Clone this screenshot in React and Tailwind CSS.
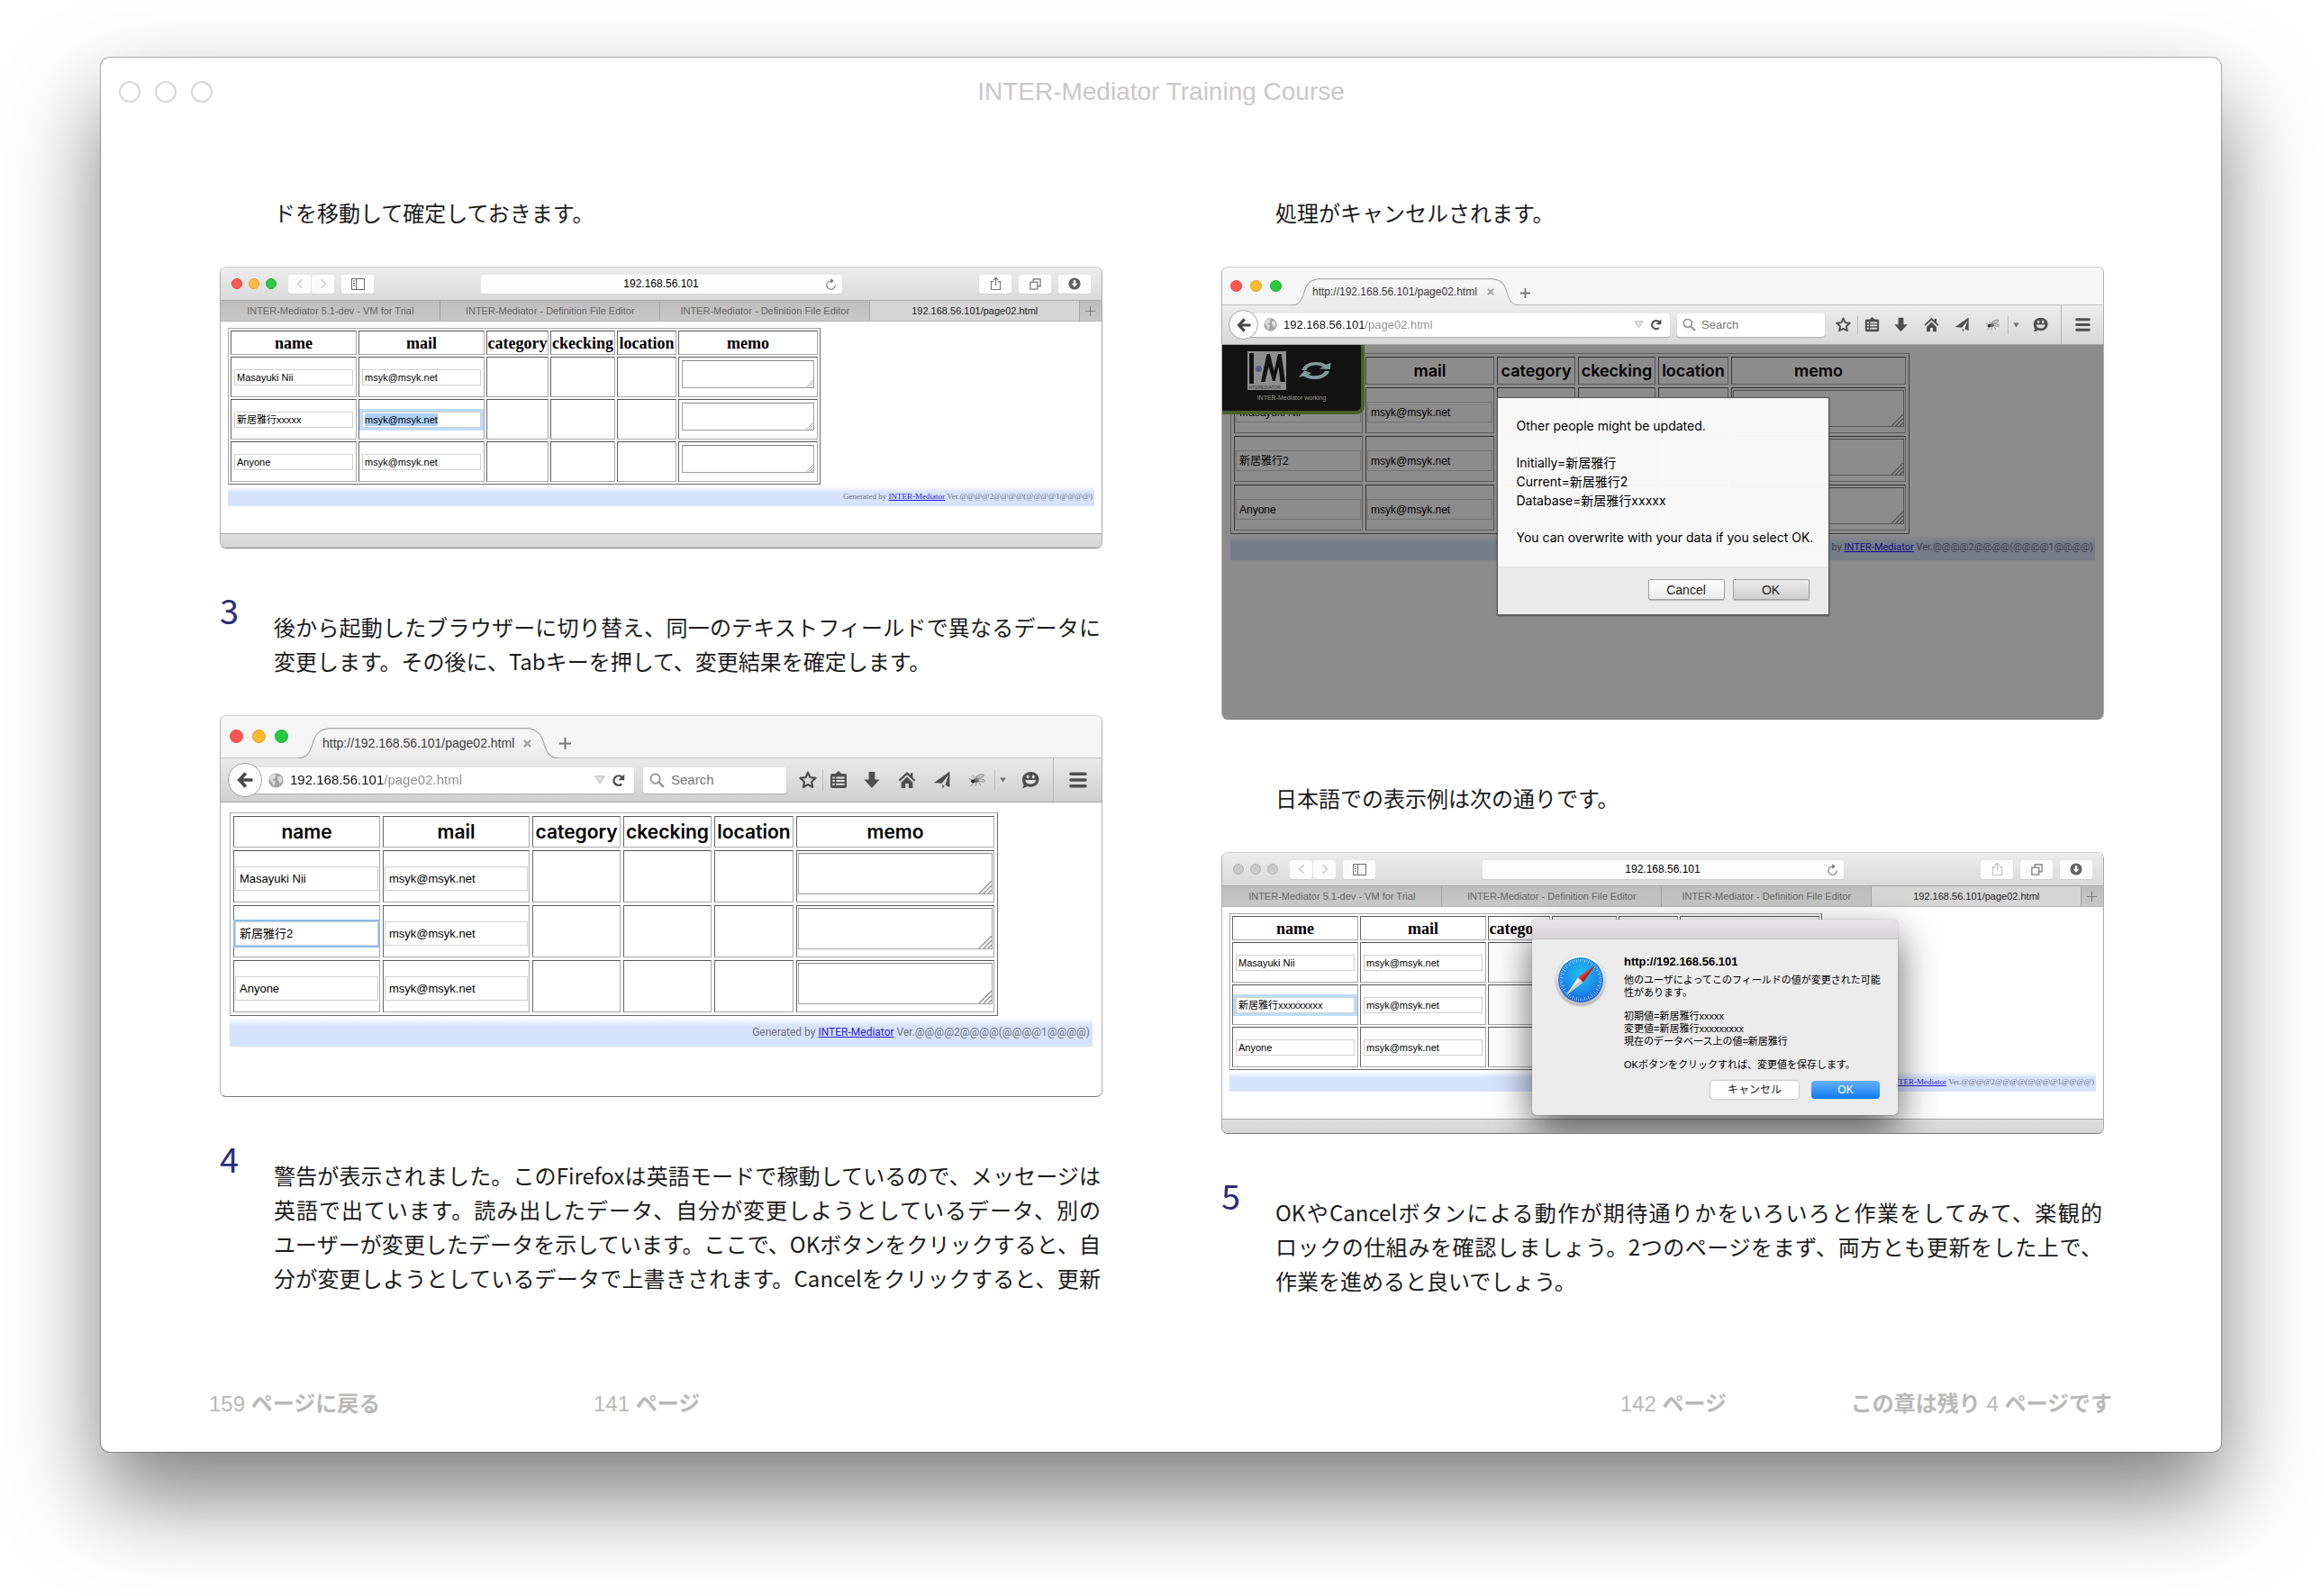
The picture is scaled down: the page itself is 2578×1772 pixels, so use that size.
import React from "react";

const SANS = "font-['Liberation_Sans','Noto_Sans_CJK_JP',sans-serif]";
const SERIF = "font-['Liberation_Serif',serif]";
const JP = "font-['Noto_Sans_CJK_JP',sans-serif]";

/* ---------- icons ---------- */

function ChevronIcon({ flip }) {
  return (
    <svg viewBox="0 0 10 14" className="h-[12px] w-[8px]" fill="none" stroke="#c4c4c4" strokeWidth="1.6">
      <path d={flip ? "M2 1l6 6-6 6" : "M8 1L2 7l6 6"} />
    </svg>
  );
}

function SidebarIcon() {
  return (
    <svg viewBox="0 0 15 13" className="h-[13px] w-[15px]" fill="none" stroke="#6b6b6b" strokeWidth="1">
      <rect x="0.5" y="0.5" width="14" height="12" />
      <path d="M5.5 0.5v12M2 3h2M2 5.500h2M2 8h2" />
    </svg>
  );
}

function SafariReloadIcon() {
  return (
    <svg viewBox="0 0 14 14" className="h-[13px] w-[13px]" fill="none" stroke="#7b7b7b" strokeWidth="1.2">
      <path d="M7 3.200A5 5 0 1 0 12 8" />
      <path d="M6.500 0.300L10.800 3.200 6.500 6z" fill="#7b7b7b" stroke="none" />
    </svg>
  );
}

function ShareIcon({ dim }) {
  return (
    <svg viewBox="0 0 14 17" className="h-[16px] w-[13px]" fill="none" stroke={dim ? "#c0c0c0" : "#757575"} strokeWidth="1.200">
      <path d="M4.500 6H1.600v9.500h10.800V6H9.500M7 11V1.500M4.200 4.200L7 1.400l2.800 2.800" />
    </svg>
  );
}

function TabsIcon() {
  return (
    <svg viewBox="0 0 14 14" className="h-[13px] w-[13px]" fill="none" stroke="#6b6b6b" strokeWidth="1.200">
      <rect x="1" y="4.500" width="8.500" height="8.500" />
      <path d="M4.500 4.500V1H13v8.500H9.500" />
    </svg>
  );
}

function DownloadsIcon() {
  return (
    <svg viewBox="0 0 14 14" className="h-[14px] w-[14px]">
      <circle cx="7" cy="7" r="6.600" fill="#636363" />
      <path d="M5.800 3h2.400v3.800h2.300L7 10.800 3.500 6.800h2.300z" fill="#fff" />
    </svg>
  );
}

function PlusIcon({ className, stroke = "#7d7d7d", width = 1.2 }) {
  return (
    <svg viewBox="0 0 12 12" className={className} stroke={stroke} strokeWidth={width}>
      <path d="M6 0v12M0 6h12" />
    </svg>
  );
}

function CloseIcon({ className }) {
  return (
    <svg viewBox="0 0 10 10" className={className} stroke="#a6a6a6" strokeWidth="2.600">
      <path d="M1 1l8 8M9 1l-8 8" />
    </svg>
  );
}

function BackIcon({ className }) {
  return (
    <svg viewBox="0 0 18 18" className={className} fill="none" stroke="#4a4a4a" strokeWidth="3.600">
      <path d="M9.800 1.500L2.800 9l7 7.500M3.200 9H17.500" />
    </svg>
  );
}

function GlobeIcon({ className }) {
  return (
    <svg viewBox="0 0 18 18" className={className}>
      <circle cx="9" cy="9" r="8.600" fill="#a3a3a3" />
      <path
        d="M1.500 6C3 3 5.500 1.500 8.500 1.600c1 .6.600 1.800-.6 2.600l1 1.200-1.800 1.800-2.400.4c.4 1.400 2.400 1 3.400 2.400.6 1.600-.6 2.400-1 3.800-.2 1.400-1.400 2-2 .8-.4-1.600 0-2.600-1.200-3.800C2.400 9.600 1.200 8 1.500 6z"
        fill="#dcdcdc"
      />
      <path d="M11 5.600c.6-1.600 1.800-2.200 3-1.800 1.400 1.200 2.200 2.800 2.200 4.600-.4 1.600-1.200 3.200-2.400 4.400-1.200.2-.8-1.400-1.200-2.800-1.800-.2-2.400-2.600-1.600-4.400z" fill="#dcdcdc" />
    </svg>
  );
}

function TriangleIcon({ className, fill }) {
  return (
    <svg viewBox="0 0 12 10" className={className}>
      <path d="M0.800 0.800h10.400L6 9z" fill={fill} stroke="#bdbdbd" strokeWidth={fill === "#e2e2e2" ? 1 : 0} />
    </svg>
  );
}

function FirefoxReloadIcon({ className }) {
  return (
    <svg viewBox="0 0 16 16" className={className} fill="none" stroke="#4d4d4d" strokeWidth="2.600">
      <path d="M12 12.300A5.600 5.600 0 1 1 12.300 4.200" />
      <path d="M15.200 0.500v7.300H8z" fill="#4d4d4d" stroke="none" />
    </svg>
  );
}

function SearchIcon({ className }) {
  return (
    <svg viewBox="0 0 18 18" className={className} fill="none" stroke="#9a9a9a">
      <circle cx="7" cy="7" r="5.400" strokeWidth="2.200" />
      <path d="M11 11l5.800 5.800" strokeWidth="2.800" />
    </svg>
  );
}

function StarIcon({ className }) {
  return (
    <svg viewBox="0 0 20 20" className={className} fill="none" stroke="#4f4f4f" strokeWidth="2.200" strokeLinejoin="round">
      <path d="M10 1.600l2.500 5.600 6 .7-4.500 4.100 1.200 6L10 15l-5.200 3 1.200-6L1.500 7.900l6-.7z" />
    </svg>
  );
}

function ClipboardIcon({ className }) {
  return (
    <svg viewBox="0 0 20 20" className={className}>
      <path d="M7 3V2.500L10 0l3 2.500V3h4a2 2 0 0 1 2 2v12a2 2 0 0 1-2 2H3a2 2 0 0 1-2-2V5a2 2 0 0 1 2-2z" fill="#4f4f4f" />
      <path d="M3.400 6.400h2.400v2H3.400zM7.400 6.400h9.200v2H7.400zM3.400 10.100h2.400v2H3.400zM7.400 10.100h9.200v2H7.400zM3.400 13.800h2.400v2H3.400zM7.400 13.800h9.200v2H7.400z" fill="#e3e3e3" />
    </svg>
  );
}

function DownIcon({ className }) {
  return (
    <svg viewBox="0 0 20 20" className={className}>
      <path d="M6.600 1h6.800v8.600h5.200L10 19 1.400 9.600h5.200z" fill="#4f4f4f" />
    </svg>
  );
}

function HomeIcon({ className }) {
  return (
    <svg viewBox="0 0 20 20" className={className} fill="#4f4f4f">
      <path d="M10 6.600l6.400 6.200V19h-4.600v-5H8.200v5H3.600v-6.200z" />
      <path d="M10 1l3.800 3.600V2.200h2.600v5l3 2.900-1.500 1.400L10 4.200l-7.900 7.300L.6 10.100z" />
    </svg>
  );
}

function PlaneIcon({ className }) {
  return (
    <svg viewBox="0 0 20 20" className={className} fill="#4f4f4f">
      <path d="M18.400 0.600V18l-5-2.600L17 4.600l-7.400 9.200L1 13z" />
      <path d="M10.200 15.200l2.400 1.300L10.600 19.500z" />
    </svg>
  );
}

function FlyIcon({ className }) {
  return (
    <svg viewBox="0 0 20 16" className={className}>
      <ellipse cx="9" cy="8.500" rx="3.200" ry="2.400" fill="#6a6a6a" />
      <ellipse cx="5.200" cy="9.400" rx="2" ry="2" fill="#1d1d1d" />
      <ellipse cx="13" cy="4" rx="4.600" ry="1.800" transform="rotate(-20 13 4)" fill="#c4c4c4" stroke="#777" strokeWidth="0.700" />
      <ellipse cx="15" cy="8.600" rx="3.800" ry="1.500" transform="rotate(10 15 8.600)" fill="#cecece" stroke="#808080" strokeWidth="0.700" />
      <path d="M4 8L0.500 6M5 12l-2 3M9 11l-1 4M12 11l2 3.500M7 6L5.500 3" stroke="#777" strokeWidth="0.800" />
    </svg>
  );
}

function SmileIcon({ className }) {
  return (
    <svg viewBox="0 0 20 20" className={className}>
      <path d="M10.300 1c5.200 0 9.200 3.500 9.200 8.300s-4 8.500-9.200 8.500c-1.400 0-2.700-.2-3.900-.7C4.800 18.300 2.900 18.900.8 18.900c1-1 1.600-2 1.900-3.200C1.600 14 1 11.800 1 9.500 1 4.600 5.100 1 10.300 1z" fill="#4f4f4f" />
      <ellipse cx="7.200" cy="6.400" rx="1.500" ry="2" fill="#e0e0e0" />
      <ellipse cx="13.200" cy="6.400" rx="1.500" ry="2" fill="#e0e0e0" />
      <path d="M4.200 10h12c-.4 3-2.800 4.600-6 4.600S4.600 13 4.200 10z" fill="#e0e0e0" />
    </svg>
  );
}

function MenuIcon({ className }) {
  return (
    <svg viewBox="0 0 20 18" className={className} stroke="#4f4f4f" strokeWidth="3.600" strokeLinecap="round">
      <path d="M2 2.200h16M2 9h16M2 15.800h16" />
    </svg>
  );
}

function CompassIcon() {
  const ticks = Array.from({ length: 60 }, (_, i) => i * 6);
  return (
    <svg viewBox="0 0 56 56" className="h-[56px] w-[56px] drop-shadow-[0_1px_1px_rgba(0,0,0,0.35)]">
      <defs>
        <radialGradient id="dial" cx="50%" cy="38%" r="62%">
          <stop offset="0" stopColor="#1fc3f5" />
          <stop offset="0.550" stopColor="#1c93ea" />
          <stop offset="1" stopColor="#1b5fd6" />
        </radialGradient>
        <linearGradient id="bezel" x1="0" y1="0" x2="0" y2="1">
          <stop offset="0" stopColor="#fafafa" />
          <stop offset="1" stopColor="#c2c2c2" />
        </linearGradient>
      </defs>
      <circle cx="28" cy="28" r="27.500" fill="url(#bezel)" />
      <circle cx="28" cy="28" r="25" fill="url(#dial)" />
      {ticks.map((a) => (
        <path key={a} d={a % 12 ? "M28 4.500v2" : "M28 4.500v4"} stroke="#bfe4ff" strokeWidth="0.700" transform={`rotate(${a} 28 28)`} />
      ))}
      <path d="M44 11.500L25 25.200l5.600 5.600z" fill="#e8332c" />
      <path d="M44 11.500L27.800 28l2.800 2.800z" fill="#b81f1c" />
      <path d="M12 44.500L25 25.200l5.600 5.600z" fill="#f5f5f5" />
      <path d="M12 44.500L27.800 28l2.800 2.800z" fill="#c9c9c9" />
    </svg>
  );
}

function MediatorLogo() {
  return (
    <svg viewBox="0 0 43 43" className="h-[43px] w-[43px]">
      <rect width="43" height="43" fill="#8e8e8e" />
      <path d="M2 2h5v34H2z" fill="#111" />
      <circle cx="12.500" cy="19.500" r="3.400" fill="#565790" />
      <path d="M15 34L21.500 3h3.500l4.500 19L34 3h3.500L42 34h-5.500L34.500 17 30.500 33h-2.500L23.500 17 19.500 34z" fill="#111" />
      <text x="1.500" y="41.500" fontSize="5" fontFamily="Liberation Sans" fill="#333">
        NTEREDIATOR
      </text>
    </svg>
  );
}

function WorkingIcon() {
  return (
    <svg viewBox="0 0 38 22" className="h-[21px] w-[38px]" fill="#809a99">
      <path d="M3.500 10.500C6 4 12 1 20 1c5 0 9 1.200 12 3l5.500-2-1 7.500L24 9l4-2.400C25.500 5.200 22.500 4.600 19 4.800 13 5.200 9.800 7.200 9 10.500z" />
      <path d="M36 11.500C33 18 27 21 19 21c-4.500 0-8-.8-11-2.400l-2.500-1.100L0 18.500 6.500 11 15 13.500 11.500 15.500c2 1.200 4.500 1.700 7.500 1.500 6-.4 10-2 11.500-5.500z" />
    </svg>
  );
}

/* ---------- page inside the browsers ---------- */

const HEADERS = ["name", "mail", "category", "ckecking", "location", "memo"];

const SIZES = {
  safari: {
    table: "w-[658px] border-spacing-[2px]",
    cols: ["w-[140px]", "w-[140px]", "w-[69px]", "w-[72px]", "w-[66px]", "w-[155px]"],
    headRow: "h-[27px]",
    head: SERIF + " text-[18px] leading-[22px] font-bold",
    row: "h-[45px]",
    cell: "px-[3px]",
    input: "h-[18px] px-[2px] text-[11px]",
    area: "h-[31px]",
    areaBox: "px-[3px] pt-[3px]",
    grip: "h-[8px] w-[8px]",
    strip: SERIF + " mt-[2px] h-[22px] pr-[2px] text-[9px]",
    body: "px-[8px] pt-[7px] pb-[30px]",
    ring: "shadow-[0_0_0_3px_#bcdcfb]",
  },
  large: {
    table: "w-[853px] border-spacing-[3px]",
    cols: ["w-[163px]", "w-[163px]", "w-[98px]", "w-[98px]", "w-[88px]", "w-[220px]"],
    headRow: "h-[35px]",
    head: "font-['Inter',sans-serif] text-[21px] leading-[24px] font-semibold",
    row: "h-[58px]",
    cell: "px-px pt-[5px]",
    input: "h-[27px] px-[4px] text-[13px]",
    area: "h-[46px]",
    areaBox: "px-px pt-[2px]",
    grip: "h-[14px] w-[14px]",
    strip: "font-['Roboto',sans-serif] mt-[2px] h-[32px] pr-[3px] text-[12px]",
    body: "px-[10px] pt-[11px] pb-[55px]",
    ring: "shadow-[0_0_0_2px_#8dbcf0]",
  },
  small: {
    table: "w-[754px] border-spacing-[3px]",
    cols: ["w-[143px]", "w-[143px]", "w-[87px]", "w-[86px]", "w-[78px]", "w-[194px]"],
    headRow: "h-[31px]",
    head: "font-['Inter',sans-serif] text-[18px] leading-[22px] font-semibold",
    row: "h-[51px]",
    cell: "px-px pt-[4px]",
    input: "h-[23px] px-[3px] text-[12px]",
    area: "h-[41px]",
    areaBox: "px-px pt-[2px]",
    grip: "h-[13px] w-[13px]",
    strip: "font-['Roboto',sans-serif] mt-px h-[28px] pr-[2px] text-[11px]",
    body: "px-[9px] pt-[9px] pb-[176px]",
    ring: "",
  },
};

const CELL = "border border-t-[#555] border-l-[#666] border-r-[#a8a8a8] border-b-[#a8a8a8]";

function RecordPage({ size, names, focus }) {
  const s = SIZES[size];
  return (
    <>
      <table className={"table-fixed border-separate border border-t-[#a8a8a8] border-l-[#a8a8a8] border-r-[#6a6a6a] border-b-[#6a6a6a] " + s.table}>
        <colgroup>
          {s.cols.map((c, i) => (
            <col key={i} className={c} />
          ))}
        </colgroup>
        <thead>
          <tr className={s.headRow}>
            {HEADERS.map((h) => (
              <th key={h} className={"p-0 text-center text-black " + CELL + " " + s.head}>
                {h}
              </th>
            ))}
          </tr>
        </thead>
        <tbody>
          {names.map((n, r) => (
            <tr key={r} className={s.row}>
              {[n, "msyk@msyk.net"].map((v, c) => {
                const focused = focus === `${r}-${c}`;
                const selected =
                  focused && c === 1
                    ? " bg-[linear-gradient(#abd0f8,#abd0f8)] bg-[length:81px_14px] bg-[position:2px_1px] bg-no-repeat"
                    : "";
                return (
                  <td key={c} className={"align-middle " + CELL + " " + s.cell}>
                    <input
                      type="text"
                      aria-label={HEADERS[c] + " " + (r + 1)}
                      defaultValue={v}
                      className={"block w-full border border-[#d0d0d0] text-black outline-none " + SANS + " " + s.input + " " + (focused ? s.ring : "") + selected}
                    />
                  </td>
                );
              })}
              <td className={"p-0 " + CELL} />
              <td className={"p-0 " + CELL} />
              <td className={"p-0 " + CELL} />
              <td className={"align-top " + CELL + " " + s.areaBox}>
                <div className="relative">
                  <textarea aria-label={"memo " + (r + 1)} className={"block w-full resize-none border border-[#a0a0a0] border-t-[#858585] " + s.area} />
                  <svg viewBox="0 0 14 14" className={"absolute right-px bottom-px " + s.grip} stroke="#8c8c8c" strokeWidth="1.300">
                    <path d="M0 14L14 0M5 14l9-9M10 14l4-4" />
                  </svg>
                </div>
              </td>
            </tr>
          ))}
        </tbody>
      </table>
      <div className={"flex items-center justify-end bg-[linear-gradient(#ffffff,#d6e3fe_30%)] text-[#6f7278] " + s.strip}>
        <p className="whitespace-nowrap">
          Generated by{" "}
          <a href="#inter-mediator" className="text-[#2a20e0] underline">
            INTER-Mediator
          </a>{" "}
          Ver.@@@@2@@@@(@@@@1@@@@)
        </p>
      </div>
    </>
  );
}

/* ---------- Safari ---------- */

function SafariWindow({ inactive, names, focus, children }) {
  const dots = inactive
    ? ["bg-[#cbcbcb] border-[#b2b2b2]", "bg-[#cbcbcb] border-[#b2b2b2]", "bg-[#cbcbcb] border-[#b2b2b2]"]
    : ["bg-[#fc5753] border-[#e2463f]", "bg-[#fdbc40] border-[#e0a033]", "bg-[#33c748] border-[#27a935]"];
  const tab = "truncate border-r border-[#a3a3a3] text-center text-[#666]";
  const btn = "flex h-[21px] items-center justify-center rounded-[3px] bg-[#fdfdfd] shadow-[0_1px_0_#cfcfcf]";
  return (
    <figure className={"relative overflow-hidden rounded-[7px] border border-[#ababab] border-t-[#cfcfcf] border-b-[#7c7c7c] bg-white " + SANS}>
      <div className="grid h-[36px] grid-cols-[1fr_401px_1fr] items-center bg-[linear-gradient(#ececec,#dadada)] px-[12px]">
        <div className="flex items-center">
          <div className="flex gap-[7px]">
            {dots.map((d, i) => (
              <button key={i} aria-label={["Close", "Minimize", "Zoom"][i]} className={"h-[12px] w-[12px] rounded-full border " + d} />
            ))}
          </div>
          <button aria-label="Back" className={btn + " ml-[13px] w-[25px]"}>
            <ChevronIcon />
          </button>
          <button aria-label="Forward" className={btn + " ml-px w-[25px]"}>
            <ChevronIcon flip />
          </button>
          <button aria-label="Sidebar" className={btn + " ml-[8px] w-[36px]"}>
            <SidebarIcon />
          </button>
        </div>
        <div className="relative">
          <input
            type="text"
            aria-label="Address"
            defaultValue="192.168.56.101"
            className="block h-[21px] w-full rounded-[3px] bg-[#fdfdfd] text-center text-[12px] text-black shadow-[0_1px_0_#cfcfcf] outline-none"
          />
          <button aria-label="Reload" className="absolute top-[4px] right-[6px]">
            <SafariReloadIcon />
          </button>
        </div>
        <div className="flex items-center justify-end gap-[8px]">
          <button aria-label="Share" className={btn + " w-[36px]"}>
            <ShareIcon dim={inactive} />
          </button>
          <button aria-label="Tabs" className={btn + " w-[36px]"}>
            <TabsIcon />
          </button>
          <button aria-label="Downloads" className={btn + " w-[36px]"}>
            <DownloadsIcon />
          </button>
        </div>
      </div>
      <div className="grid h-[24px] grid-cols-[245fr_244fr_234fr_233fr_24px] border-t border-b border-t-[#a9a9a9] border-b-[#b5b5b5] bg-[linear-gradient(#bdbdbd,#c8c8c8)] text-[11px] leading-[22px]">
        <button className={tab}>INTER-Mediator 5.1-dev - VM for Trial</button>
        <button className={tab}>INTER-Mediator - Definition File Editor</button>
        <button className={tab}>INTER-Mediator - Definition File Editor</button>
        <button className="truncate border-r border-[#a3a3a3] bg-[#d6d6d6] text-center text-[#1e1e1e]">192.168.56.101/page02.html</button>
        <button aria-label="New tab" className="flex items-center justify-center">
          <PlusIcon className="h-[11px] w-[11px]" />
        </button>
      </div>
      <div className={SIZES.safari.body}>
        <RecordPage size="safari" names={names} focus={focus} />
      </div>
      <div className="h-[16px] border-t border-[#a2a2a2] bg-[linear-gradient(#e0e0e0,#d4d4d4)]" />
      {children}
    </figure>
  );
}

function SafariAlert() {
  return (
    <div
      role="dialog"
      aria-label="http://192.168.56.101"
      className="absolute top-[74px] left-[344px] w-[406px] overflow-hidden rounded-[5px] bg-[#ececec] shadow-[0_0_1px_rgba(0,0,0,0.6),0_18px_44px_rgba(0,0,0,0.62)]"
    >
      <div className="h-[22px] border-b border-[#c6c4c6] bg-[linear-gradient(#e9e6e9,#d6d3d6)]" />
      <div className="flex pt-[17px] pl-[26px]">
        <CompassIcon />
        <div className="ml-[20px] text-[11px] leading-[14px] whitespace-nowrap text-black">
          <p className="text-[13px] leading-[16px] font-bold">http://192.168.56.101</p>
          <p className="mt-[5px]">
            他のユーザによってこのフィールドの値が変更された可能
            <br />
            性があります。
          </p>
          <p className="mt-[12px]">
            初期値=新居雅行xxxxx
            <br />
            変更値=新居雅行xxxxxxxxx
            <br />
            現在のデータベース上の値=新居雅行
          </p>
          <p className="mt-[12px]">OKボタンをクリックすれば、変更値を保存します。</p>
        </div>
      </div>
      <div className="flex justify-end gap-[14px] pt-[11px] pr-[20px] pb-[18px] text-[12px] leading-[20px]">
        <button className="h-[20px] w-[98px] rounded-[4px] bg-white text-[#222] shadow-[0_0_1px_1px_#c9c9c9]">キャンセル</button>
        <button className="h-[20px] w-[76px] rounded-[4px] bg-[linear-gradient(#66b1fa,#0f79f5)] text-white">OK</button>
      </div>
    </div>
  );
}

/* ---------- Firefox ---------- */

const FX = {
  large: {
    strip: "h-[47px]",
    dots: "top-[15px] left-[10px] gap-[10px]",
    dot: "h-[15px] w-[15px]",
    tabs: "pl-[85px]",
    tab: "h-[34px] w-[291px] pl-[28px] text-[14px]",
    close: "ml-[10px] h-[9px] w-[9px]",
    plus: "mb-[9px] h-[13px] w-[13px]",
    nav: "h-[49px] pl-[8px] bg-[linear-gradient(#eaeaea,#d0d0d0)]",
    back: "h-[38px] w-[38px]",
    backIcon: "h-[18px] w-[18px]",
    url: "-ml-[19px] h-[29px] pl-[26px] pr-[10px] gap-[7px] text-[15px]",
    urlText: "bg-[linear-gradient(to_right,#111_104px,#8d8d8d_104px)]",
    globe: "h-[17px] w-[17px]",
    caret: "h-[10px] w-[12px]",
    reload: "h-[15px] w-[15px]",
    search: "ml-[10px] h-[29px] w-[159px] pl-[7px] gap-[7px] text-[15px]",
    searchIcon: "h-[17px] w-[17px]",
    star: "ml-[7px] w-[33px]",
    clip: "w-[34px]",
    tool: "w-[39px]",
    drop: "w-[17px]",
    smile: "w-[43px]",
    menu: "w-[53px]",
    icon: "h-[20px] w-[20px]",
    sep: "h-[23px]",
  },
  small: {
    strip: "h-[42px]",
    dots: "top-[14px] left-[9px] gap-[9px]",
    dot: "h-[13px] w-[13px]",
    tabs: "pl-[76px]",
    tab: "h-[30px] w-[255px] pl-[24px] text-[12px]",
    close: "ml-[11px] h-[8px] w-[8px]",
    plus: "mb-[7px] h-[11px] w-[11px]",
    nav: "h-[44px] pl-[7px] bg-[linear-gradient(#ededed,#d8d8d8)]",
    back: "h-[33px] w-[33px]",
    backIcon: "h-[16px] w-[16px]",
    url: "-ml-[17px] h-[26px] pl-[23px] pr-[9px] gap-[7px] text-[13px]",
    urlText: "bg-[linear-gradient(to_right,#111_90px,#8d8d8d_90px)]",
    globe: "h-[15px] w-[15px]",
    caret: "h-[9px] w-[11px]",
    reload: "h-[13px] w-[13px]",
    search: "ml-[8px] h-[26px] w-[164px] pl-[6px] gap-[6px] text-[13px]",
    searchIcon: "h-[15px] w-[15px]",
    star: "ml-[4px] w-[32px]",
    clip: "w-[30px]",
    tool: "w-[34px]",
    drop: "w-[16px]",
    smile: "w-[38px]",
    menu: "w-[46px]",
    icon: "h-[17px] w-[17px]",
    sep: "h-[20px]",
  },
};

function FirefoxWindow({ size, names, focus, children }) {
  const f = FX[size];
  const dots = ["bg-[#fe5752] border-[#e4453e]", "bg-[#fdbb2e] border-[#dfa023]", "bg-[#28c840] border-[#1dab2c]"];
  const tool = "flex shrink-0 items-center justify-center ";
  return (
    <figure className={"overflow-hidden rounded-[7px] border border-[#b0b0b0] border-t-[#d2d2d2] border-b-[#7c7c7c] bg-white " + SANS}>
      <div className={"relative flex items-end border-b border-[#c2c2c2] bg-[#f6f6f6] " + f.strip + " " + f.tabs}>
        <div className={"absolute flex " + f.dots}>
          {dots.map((d, i) => (
            <button key={i} aria-label={["Close", "Minimize", "Zoom"][i]} className={"rounded-full border " + f.dot + " " + d} />
          ))}
        </div>
        <button className={"relative -mb-px flex shrink-0 items-center text-[#3c3c3c] " + f.tab}>
          <svg viewBox="0 0 291 34" preserveAspectRatio="none" className="absolute inset-0 h-full w-full">
            <defs>
              <linearGradient id={"tab-" + size} x1="0" y1="0" x2="0" y2="1">
                <stop offset="0" stopColor="#f9f9f9" />
                <stop offset="1" stopColor="#eaeaea" />
              </linearGradient>
            </defs>
            <path
              d="M0 34C10 34 14 28 17 18 20 6 26 0.700 38 0.700H253C265 0.700 271 6 274 18 277 28 281 34 291 34"
              fill={"url(#tab-" + size + ")"}
              stroke="#a9a9a9"
              strokeWidth="1.200"
            />
          </svg>
          <span className="relative whitespace-nowrap">http://192.168.56.101/page02.html</span>
          <CloseIcon className={"relative " + f.close} />
        </button>
        <button aria-label="New tab">
          <PlusIcon className={f.plus} stroke="#7a7a7a" width={2} />
        </button>
      </div>
      <div className={"flex items-center border-b border-[#a6a6a6] " + f.nav}>
        <button aria-label="Back" className={"relative z-10 flex shrink-0 items-center justify-center rounded-full border border-[#a5a5a5] bg-[#fcfcfc] " + f.back}>
          <BackIcon className={f.backIcon} />
        </button>
        <div className={"flex min-w-0 flex-1 items-center rounded-r-[3px] bg-white shadow-[0_1px_1px_#b0b0b0] " + f.url}>
          <GlobeIcon className={"shrink-0 " + f.globe} />
          <input
            type="text"
            aria-label="Address"
            defaultValue="192.168.56.101/page02.html"
            className={"min-w-0 flex-1 bg-clip-text text-transparent outline-none " + f.urlText}
          />
          <TriangleIcon className={"shrink-0 " + f.caret} fill="#e2e2e2" />
          <button aria-label="Reload">
            <FirefoxReloadIcon className={f.reload} />
          </button>
        </div>
        <div className={"flex shrink-0 items-center rounded-[3px] bg-white shadow-[0_1px_1px_#b0b0b0] " + f.search}>
          <SearchIcon className={"shrink-0 " + f.searchIcon} />
          <input type="text" aria-label="Search" placeholder="Search" className="w-full min-w-0 outline-none placeholder:text-[#777]" />
        </div>
        <button aria-label="Bookmark" className={tool + f.star}>
          <StarIcon className={f.icon} />
        </button>
        <span className={"w-px shrink-0 bg-[#bdbdbd] " + f.sep} />
        <button aria-label="Bookmarks list" className={tool + f.clip}>
          <ClipboardIcon className={f.icon} />
        </button>
        <button aria-label="Downloads" className={tool + f.tool}>
          <DownIcon className={f.icon} />
        </button>
        <button aria-label="Home" className={tool + f.tool}>
          <HomeIcon className={f.icon} />
        </button>
        <button aria-label="Send" className={tool + f.tool}>
          <PlaneIcon className={f.icon} />
        </button>
        <button aria-label="Firebug" className={tool + f.tool}>
          <FlyIcon className={f.icon} />
        </button>
        <span className={"w-px shrink-0 bg-[#bdbdbd] " + f.sep} />
        <button aria-label="Firebug menu" className={tool + f.drop}>
          <TriangleIcon className="h-[6px] w-[9px]" fill="#6b6b6b" />
        </button>
        <button aria-label="Feedback" className={tool + f.smile}>
          <SmileIcon className={f.icon} />
        </button>
        <span className="ml-[4px] w-px shrink-0 self-stretch bg-[#b4b9bf]" />
        <button aria-label="Menu" className={tool + f.menu}>
          <MenuIcon className={f.icon} />
        </button>
      </div>
      <div className={"relative " + SIZES[size].body}>
        <RecordPage size={size} names={names} focus={focus} />
        {children}
      </div>
    </figure>
  );
}

function FirefoxConfirm() {
  const btn = "h-[23px] w-[85px] rounded-[2px] border border-[#a0a0a0] text-[14px] leading-[20px] text-[#222] shadow-[0_1px_1px_#bbb] ";
  return (
    <>
      <div className="absolute inset-0 flex items-start justify-center bg-black/45 pt-[58px]">
        <div
          role="dialog"
          aria-label="Confirm"
          className="w-[369px] border border-[#555] bg-[#fcfcfc]/97 font-['Inter','Noto_Sans_CJK_JP',sans-serif] text-[14px] text-black shadow-[0_1px_2px_rgba(0,0,0,0.4)]"
        >
          <div className="h-[187px] px-[21px] pt-[20px] leading-[21px] whitespace-nowrap">
            <p>Other people might be updated.</p>
            <p className="mt-[20px]">
              Initially=新居雅行
              <br />
              Current=新居雅行2
              <br />
              Database=新居雅行xxxxx
            </p>
            <p className="mt-[20px]">You can overwrite with your data if you select OK.</p>
          </div>
          <div className={"flex h-[53px] justify-end gap-[9px] border-t border-[#dedede] bg-[#ebebeb] pt-[13px] pr-[21px] " + SANS}>
            <button className={btn + "bg-[linear-gradient(#fefefe,#ececec)]"}>Cancel</button>
            <button className={btn + "bg-[linear-gradient(#ececec,#cfcfcf)]"}>OK</button>
          </div>
        </div>
      </div>
      <div className="absolute top-0 left-0 flex h-[77px] w-[158px] flex-col items-center rounded-br-[9px] border-r-[4px] border-b-[4px] border-[#4a5f22] bg-[#121212] pt-[7px]">
        <div className="flex items-center gap-[13px] pr-[4px]">
          <MediatorLogo />
          <WorkingIcon />
        </div>
        <p className="mt-[4px] text-[7px] leading-[9px] text-[#9a9a8c]">INTER-Mediator working</p>
      </div>
    </>
  );
}

/* ---------- book ---------- */

function Step({ number, lines, last }) {
  return (
    <div className="mt-[49px] flex">
      <span className="w-[60px] shrink-0 text-[38px] leading-[38px] text-[#2b2d78]">{number}</span>
      <p className="min-w-0 flex-1 pt-[19px] pr-[2px]">
        {lines.map((l) => (
          <span key={l} className="block text-justify whitespace-nowrap [text-align-last:justify]">
            {l}
          </span>
        ))}
        {last && <span className="block">{last}</span>}
      </p>
    </div>
  );
}

export default function App() {
  return (
    <div className="flex min-h-screen flex-col bg-white px-[112px] pt-[64px] pb-[160px]">
      <div className="flex flex-1 flex-col rounded-[10px] bg-white shadow-[0_0_0_1px_rgba(0,0,0,0.28),0_50px_100px_rgba(0,0,0,0.5)]">
        <header className="grid h-[76px] grid-cols-[1fr_auto_1fr] items-center px-[20px]">
          <div className="flex gap-[16px]">
            {["Close", "Minimize", "Zoom"].map((l) => (
              <button key={l} aria-label={l} className="h-[24px] w-[24px] rounded-full border-2 border-[#d8d8d8]" />
            ))}
          </div>
          <h1 className={"text-[28px] leading-[32px] text-[#c9c9c9] " + SANS}>INTER-Mediator Training Course</h1>
        </header>

        <main className={"grid flex-1 grid-cols-2 gap-[132px] pt-[77px] pr-[130px] pl-[132px] text-[24px] leading-[38px] text-[#1c1c1c] " + JP}>
          <section>
            <p className="mb-[41px] pl-[60px]">ドを移動して確定しておきます。</p>
            <SafariWindow names={["Masayuki Nii", "新居雅行xxxxx", "Anyone"]} focus="1-1" />
            <Step
              number="3"
              lines={["後から起動したブラウザーに切り替え、同一のテキストフィールドで異なるデータに"]}
              last="変更します。その後に、Tabキーを押して、変更結果を確定します。"
            />
            <div className="mt-[41px]">
              <FirefoxWindow size="large" names={["Masayuki Nii", "新居雅行2", "Anyone"]} focus="1-0" />
            </div>
            <Step
              number="4"
              lines={[
                "警告が表示されました。このFirefoxは英語モードで稼動しているので、メッセージは",
                "英語で出ています。読み出したデータ、自分が変更しようとしているデータ、別の",
                "ユーザーが変更したデータを示しています。ここで、OKボタンをクリックすると、自",
                "分が変更しようとしているデータで上書きされます。Cancelをクリックすると、更新",
              ]}
            />
          </section>

          <section>
            <p className="mb-[41px] pl-[60px]">処理がキャンセルされます。</p>
            <FirefoxWindow size="small" names={["Masayuki Nii", "新居雅行2", "Anyone"]}>
              <FirefoxConfirm />
            </FirefoxWindow>
            <p className="mt-[68px] mb-[41px] pl-[60px]">日本語での表示例は次の通りです。</p>
            <SafariWindow inactive names={["Masayuki Nii", "新居雅行xxxxxxxxx", "Anyone"]} focus="1-0">
              <SafariAlert />
            </SafariWindow>
            <Step
              number="5"
              lines={["OKやCancelボタンによる動作が期待通りかをいろいろと作業をしてみて、楽観的", "ロックの仕組みを確認しましょう。2つのページをまず、両方とも更新をした上で、"]}
              last="作業を進めると良いでしょう。"
            />
          </section>
        </main>

        <footer className={"flex h-[106px] items-center pr-[121px] pl-[120px] text-[24px] leading-[32px] text-[#b9b9b9] " + SANS}>
          <a href="#page-159" className="w-[427px]">
            159 <span className="font-bold">ページに戻る</span>
          </a>
          <p>
            141 <span className="font-bold">ページ</span>
          </p>
          <span className="flex-1" />
          <p>
            142 <span className="font-bold">ページ</span>
          </p>
          <p className="w-[428px] text-right">
            <span className="font-bold">この章は残り</span> 4 <span className="font-bold">ページです</span>
          </p>
        </footer>
      </div>
    </div>
  );
}
